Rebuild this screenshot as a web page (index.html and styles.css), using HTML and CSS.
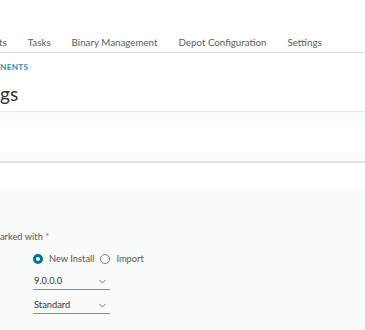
FILE: index.html
```html
<!DOCTYPE html>
<html>
<head>
<meta charset="utf-8">
<link rel="stylesheet" href="styles.css">
</head>
<body>
<div class="page">
  <nav class="tabs">
    <span class="tab first">ts</span>
    <span class="tab">Tasks</span>
    <span class="tab">Binary Management</span>
    <span class="tab">Depot Configuration</span>
    <span class="tab">Settings</span>
  </nav>
  <header class="title-block">
    <div class="crumb">NENTS</div>
    <h1 class="heading">gs</h1>
  </header>
  <section class="band">
    <div class="band-top"></div>
    <div class="band-mid"></div>
    <div class="band-bottom"></div>
  </section>
  <div class="spacer"></div>
  <section class="form">
    <div class="label">arked with <span class="req">*</span></div>
    <div class="controls">
      <div class="radios">
        <label class="radio"><span class="dot checked"></span>New Install</label>
        <label class="radio"><span class="dot"></span>Import</label>
      </div>
      <div class="select"><span>9.0.0.0</span><svg class="chev" width="7" height="5" viewBox="0 0 7 5"><path d="M0.5 1 L3.5 4 L6.5 1" fill="none" stroke="#6a6a6a" stroke-width="0.9"/></svg></div>
      <div class="select"><span>Standard</span><svg class="chev" width="7" height="5" viewBox="0 0 7 5"><path d="M0.5 1 L3.5 4 L6.5 1" fill="none" stroke="#6a6a6a" stroke-width="0.9"/></svg></div>
    </div>
  </section>
</div>
</body>
</html>
```
FILE: styles.css
```css
html, body {
  margin: 0;
  padding: 0;
  background: #ffffff;
}
body {
  font-family: Lato, "Open Sans", sans-serif;
  width: 365px;
  height: 330px;
  overflow: hidden;
}
.page {
  display: flex;
  flex-direction: column;
  height: 330px;
}
.tabs {
  height: 53px;
  box-sizing: border-box;
  display: flex;
  align-items: flex-end;
  gap: 21px;
  padding-bottom: 4px;
  border-bottom: 1px solid #d9dcde;
  font-size: 9.75px;
  line-height: 12px;
  color: #5c5c5c;
}
.tab.first {
  margin-left: -1px;
}
.title-block {
  border-bottom: 1px solid #e6e8ea;
  padding-top: 9px;
  padding-bottom: 5px;
}
.crumb {
  font-size: 8.2px;
  line-height: 10px;
  font-weight: 700;
  letter-spacing: 0.35px;
  color: #2a8ebf;
}
.heading {
  margin: 10px 0 0;
  font-size: 19px;
  line-height: 24px;
  font-weight: 400;
  color: #2f2f2f;
}
.band {
  display: flex;
  flex-direction: column;
}
.band-top {
  height: 10px;
  background: #fbfcfc;
}
.band-mid {
  height: 30px;
  background: #ffffff;
}
.band-bottom {
  height: 9px;
  background: #fcfcfc;
  border-bottom: 2px solid #e1e4e6;
}
.spacer {
  height: 25px;
  background: #ffffff;
}
.form {
  flex: 1;
  background: #f9fafa;
  padding-top: 43px;
  font-size: 9.3px;
  color: #565656;
}
.label {
  line-height: 12px;
}
.req {
  color: #d9534f;
}
.controls {
  margin-left: 33px;
  display: flex;
  flex-direction: column;
}
.radios {
  display: flex;
  align-items: center;
  gap: 6px;
  margin-top: 10px;
  height: 12px;
}
.radio {
  display: flex;
  align-items: center;
  gap: 6px;
  line-height: 12px;
}
.dot {
  width: 8px;
  height: 8px;
  border-radius: 50%;
  border: 1px solid #7a7a7a;
  background: #ffffff;
  box-sizing: content-box;
}
.dot.checked {
  width: 4px;
  height: 4px;
  border: 3px solid #0072a3;
  background: #ffffff;
}
.select {
  width: 77px;
  height: 20px;
  box-sizing: border-box;
  display: flex;
  align-items: flex-end;
  justify-content: space-between;
  padding: 0 4px 2px 1px;
  line-height: 12px;
  border-bottom: 1px solid #8c8c8c;
  color: #333333;
  margin-top: 5px;
}
.select + .select {
  margin-top: 4px;
}
.chev {
  display: block;
  margin-bottom: 3px;
}
```
